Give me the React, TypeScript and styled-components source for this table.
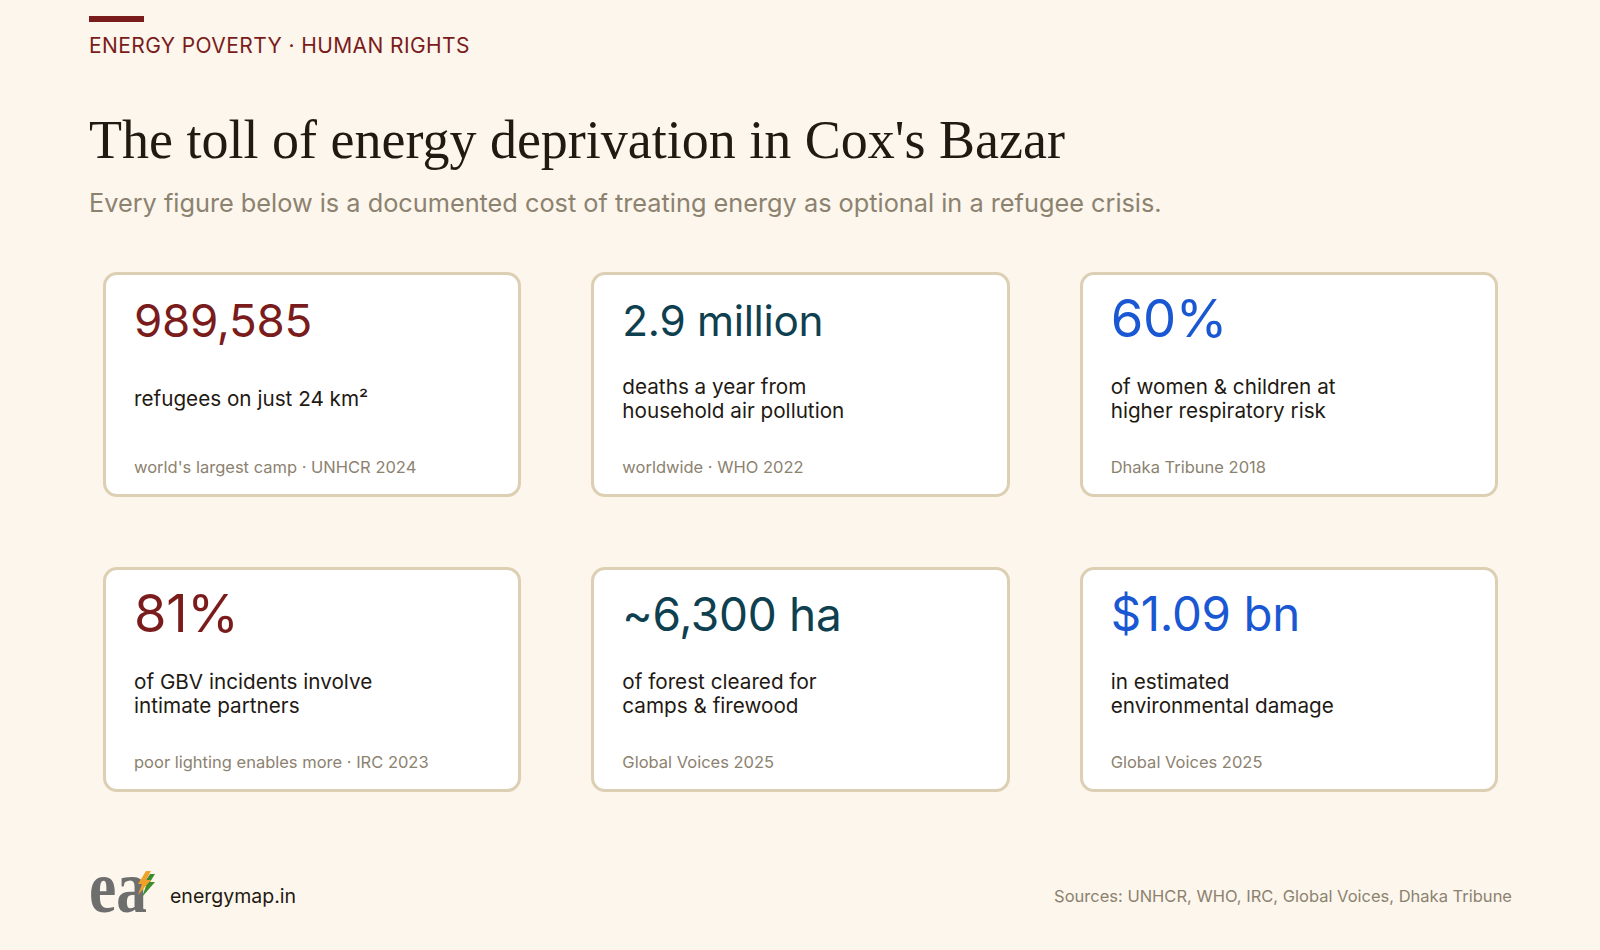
import React from "react";
import styled, { createGlobalStyle } from "styled-components";

const GlobalStyle = createGlobalStyle`
  html, body {
    margin: 0;
    padding: 0;
    background: #fdf6ec;
  }
  body {
    font-family: Inter, "Noto Sans", "DejaVu Sans", sans-serif;
    -webkit-font-smoothing: antialiased;
  }
`;

const Page = styled.div`
  width: 1600px;
  height: 950px;
  box-sizing: border-box;
  padding: 16px 88px 32px 89px;
  display: flex;
  flex-direction: column;
  background: #fdf6ec;
`;

const AccentBar = styled.div`
  width: 55px;
  height: 6px;
  background: #7a1c1c;
`;

const Eyebrow = styled.div`
  margin-top: 11px;
  font-size: 21px;
  line-height: 26px;
  letter-spacing: 0.4px;
  color: #7a1c1c;
  text-transform: uppercase;
`;

const Title = styled.h1`
  margin: 48px 0 0;
  font-family: "Liberation Serif", "DejaVu Serif", serif;
  font-weight: 400;
  font-size: 54px;
  line-height: 66px;
  color: #1f1a12;
`;

const Subtitle = styled.p`
  margin: 15px 0 0;
  font-size: 25.3px;
  line-height: 30px;
  color: #8c8270;
`;

const Grid = styled.div`
  margin-top: 54px;
  padding: 0 14px;
  display: grid;
  grid-template-columns: repeat(3, 1fr);
  column-gap: 70px;
  row-gap: 70px;
`;

const Card = styled.div`
  height: 225px;
  box-sizing: border-box;
  border: 3px solid #ddcfb3;
  border-radius: 14px;
  background: #ffffff;
  padding: 20px 28px 17px;
  display: flex;
  flex-direction: column;
`;

type Tone = "red" | "teal" | "blue";

const toneColor: Record<Tone, string> = {
  red: "#7a1c1c",
  teal: "#0e4050",
  blue: "#1a57d2",
};

const FigureBox = styled.div`
  height: 42px;
  margin-bottom: 3px;
  display: flex;
  align-items: flex-end;
`;

const FigureText = styled.span<{ $tone: Tone; $size: number }>`
  font-size: ${(p) => p.$size}px;
  line-height: 0.73;
  font-weight: 400;
  letter-spacing: -0.3px;
  white-space: nowrap;
  color: ${(p) => toneColor[p.$tone]};
`;

const LabelArea = styled.div`
  flex: 1;
  display: flex;
  align-items: center;
`;

const Label = styled.div`
  font-size: 20.7px;
  line-height: 24px;
  color: #1f1a14;
`;

const Note = styled.div`
  font-size: 16.5px;
  line-height: 20px;
  color: #8c8270;
`;

const Footer = styled.div`
  margin-top: auto;
  display: flex;
  align-items: center;
  justify-content: space-between;
`;

const Brand = styled.div`
  display: flex;
  align-items: center;
  gap: 15px;
`;

const BrandName = styled.span`
  font-size: 19.5px;
  color: #1f1a14;
  margin-top: 4px;
`;

const Sources = styled.span`
  font-size: 16.5px;
  color: #8c8270;
  margin-top: 4px;
`;

const LogoSvg = styled.svg`
  display: block;
  overflow: visible;
`;

const Logo = () => (
  <LogoSvg width="66" height="48" viewBox="0 0 66 48" aria-label="energymap logo">
    <text
      x="0"
      y="42"
      fontFamily="'Liberation Serif', 'DejaVu Serif', serif"
      fontWeight="700"
      fontSize="74"
      fill="#6e6e6e"
      textLength="58"
      lengthAdjust="spacingAndGlyphs"
    >
      ea
    </text>
    <polygon points="61,4 66,4 61,12 66,12 53,27 57,16 53,16" fill="#3c8c2e" />
    <polygon points="57,1 62,1 57,10 62,10 49,25 53,14 49,14" fill="#f0a12a" />
  </LogoSvg>
);

const stats: { value: string; size: number; tone: Tone; label: string[]; note: string }[] = [
  { value: "989,585", size: 45.7, tone: "red", label: ["refugees on just 24 km²"], note: "world's largest camp · UNHCR 2024" },
  { value: "2.9 million", size: 42.3, tone: "teal", label: ["deaths a year from", "household air pollution"], note: "worldwide · WHO 2022" },
  { value: "60%", size: 52.6, tone: "blue", label: ["of women & children at", "higher respiratory risk"], note: "Dhaka Tribune 2018" },
  { value: "81%", size: 52.5, tone: "red", label: ["of GBV incidents involve", "intimate partners"], note: "poor lighting enables more · IRC 2023" },
  { value: "~6,300 ha", size: 46, tone: "teal", label: ["of forest cleared for", "camps & firewood"], note: "Global Voices 2025" },
  { value: "$1.09 bn", size: 47.4, tone: "blue", label: ["in estimated", "environmental damage"], note: "Global Voices 2025" },
];

export default function App() {
  return (
    <>
      <GlobalStyle />
      <Page>
        <AccentBar />
        <Eyebrow>Energy Poverty · Human Rights</Eyebrow>
        <Title>The toll of energy deprivation in Cox's Bazar</Title>
        <Subtitle>
          Every figure below is a documented cost of treating energy as optional in a refugee crisis.
        </Subtitle>
        <Grid>
          {stats.map((s) => (
            <Card key={s.value}>
              <FigureBox>
                <FigureText $tone={s.tone} $size={s.size}>
                  {s.value}
                </FigureText>
              </FigureBox>
              <LabelArea>
                <Label>
                  {s.label.map((l, i) => (
                    <React.Fragment key={i}>
                      {i > 0 && <br />}
                      {l}
                    </React.Fragment>
                  ))}
                </Label>
              </LabelArea>
              <Note>{s.note}</Note>
            </Card>
          ))}
        </Grid>
        <Footer>
          <Brand>
            <Logo />
            <BrandName>energymap.in</BrandName>
          </Brand>
          <Sources>Sources: UNHCR, WHO, IRC, Global Voices, Dhaka Tribune</Sources>
        </Footer>
      </Page>
    </>
  );
}
